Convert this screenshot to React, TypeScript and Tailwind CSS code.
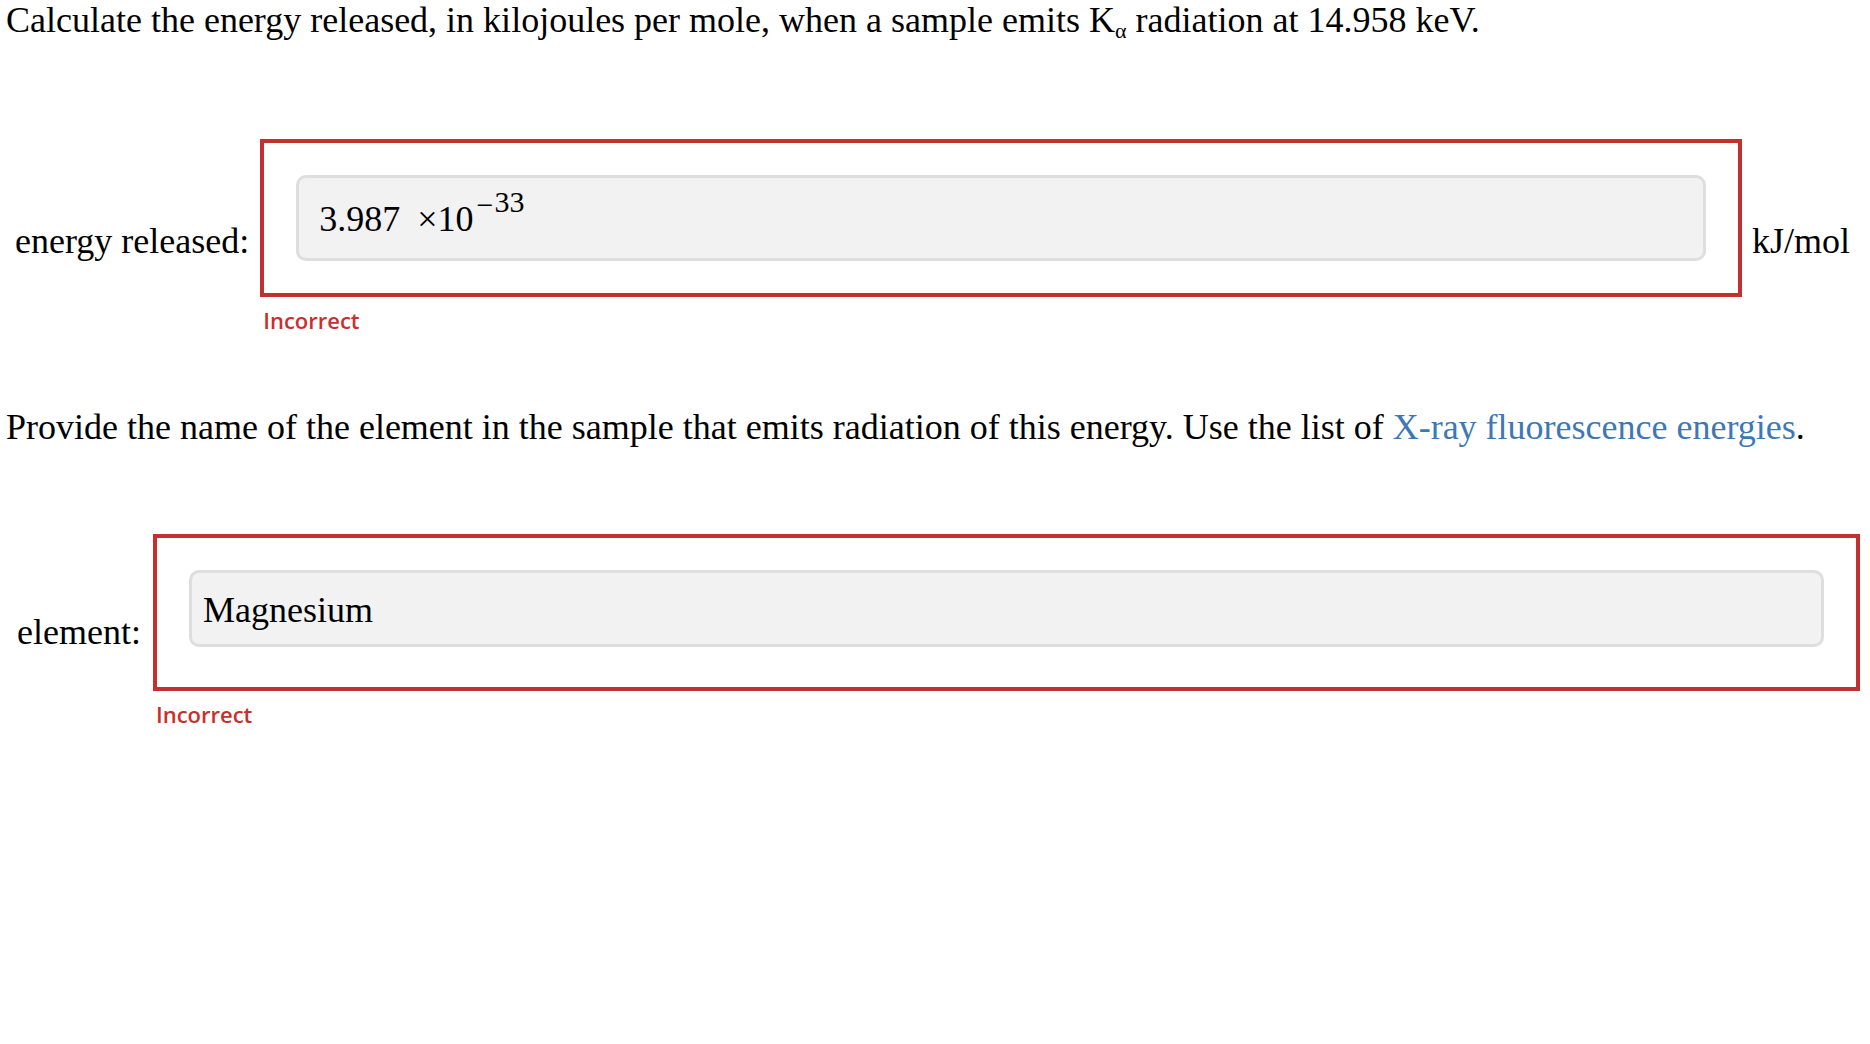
import React from "react";

function IncorrectNote() {
  return (
    <div className="mt-2 pl-[3px] font-['Open_Sans',sans-serif] text-[22px] leading-[30px] font-semibold text-[#c8302e]">
      Incorrect
    </div>
  );
}

export default function App() {
  return (
    <div className="w-[1870px] h-[1044px] bg-white pl-[6px] pr-[10px] font-['Liberation_Serif',serif] text-[36px] leading-[40px] text-black">
      <p>
        Calculate the energy released, in kilojoules per mole, when a sample emits K
        <span className="relative top-[6px] text-[22px]">α</span> radiation at 14.958 keV.
      </p>

      {/* energy row */}
      <div className="mt-[94px] mr-[10px] flex items-start">
        <span className="ml-[9px] mt-[82px] whitespace-nowrap">energy released:</span>
        <div className="ml-[11px] flex flex-1 flex-col">
          <div className="border-4 border-[#c4302f] p-[32px]">
            <div className="flex h-[86px] items-start rounded-[10px] border-[3px] border-[#dedede] bg-[#f2f2f2] pl-[20px] pt-[21px]">
              <span>3.987</span>
              <span className="ml-[17px]">×10</span>
              <span className="relative top-[-17px] ml-[3px] text-[30px] leading-[40px]">
                <span className="relative top-[3px]">−</span>
                <span className="ml-[1px]">33</span>
              </span>
            </div>
          </div>
          <IncorrectNote />
        </div>
        <span className="ml-[10px] mt-[82px] whitespace-nowrap">kJ/mol</span>
      </div>

      <p className="mt-[72px]">
        Provide the name of the element in the sample that emits radiation of this energy. Use the list of{" "}
        <a className="text-[#3d78b6] no-underline">X-ray fluorescence energies</a>.
      </p>

      {/* element row */}
      <div className="mt-[87px] flex items-start">
        <span className="ml-[11px] mt-[78px] whitespace-nowrap">element:</span>
        <div className="ml-[12px] flex flex-1 flex-col">
          <div className="border-4 border-[#c4302f] px-[32px] pt-[32px] pb-[40px]">
            <div className="h-[77px] rounded-[10px] border-[3px] border-[#dedede] bg-[#f2f2f2] pl-[11px] pt-[17px]">
              Magnesium
            </div>
          </div>
          <IncorrectNote />
        </div>
      </div>
    </div>
  );
}
